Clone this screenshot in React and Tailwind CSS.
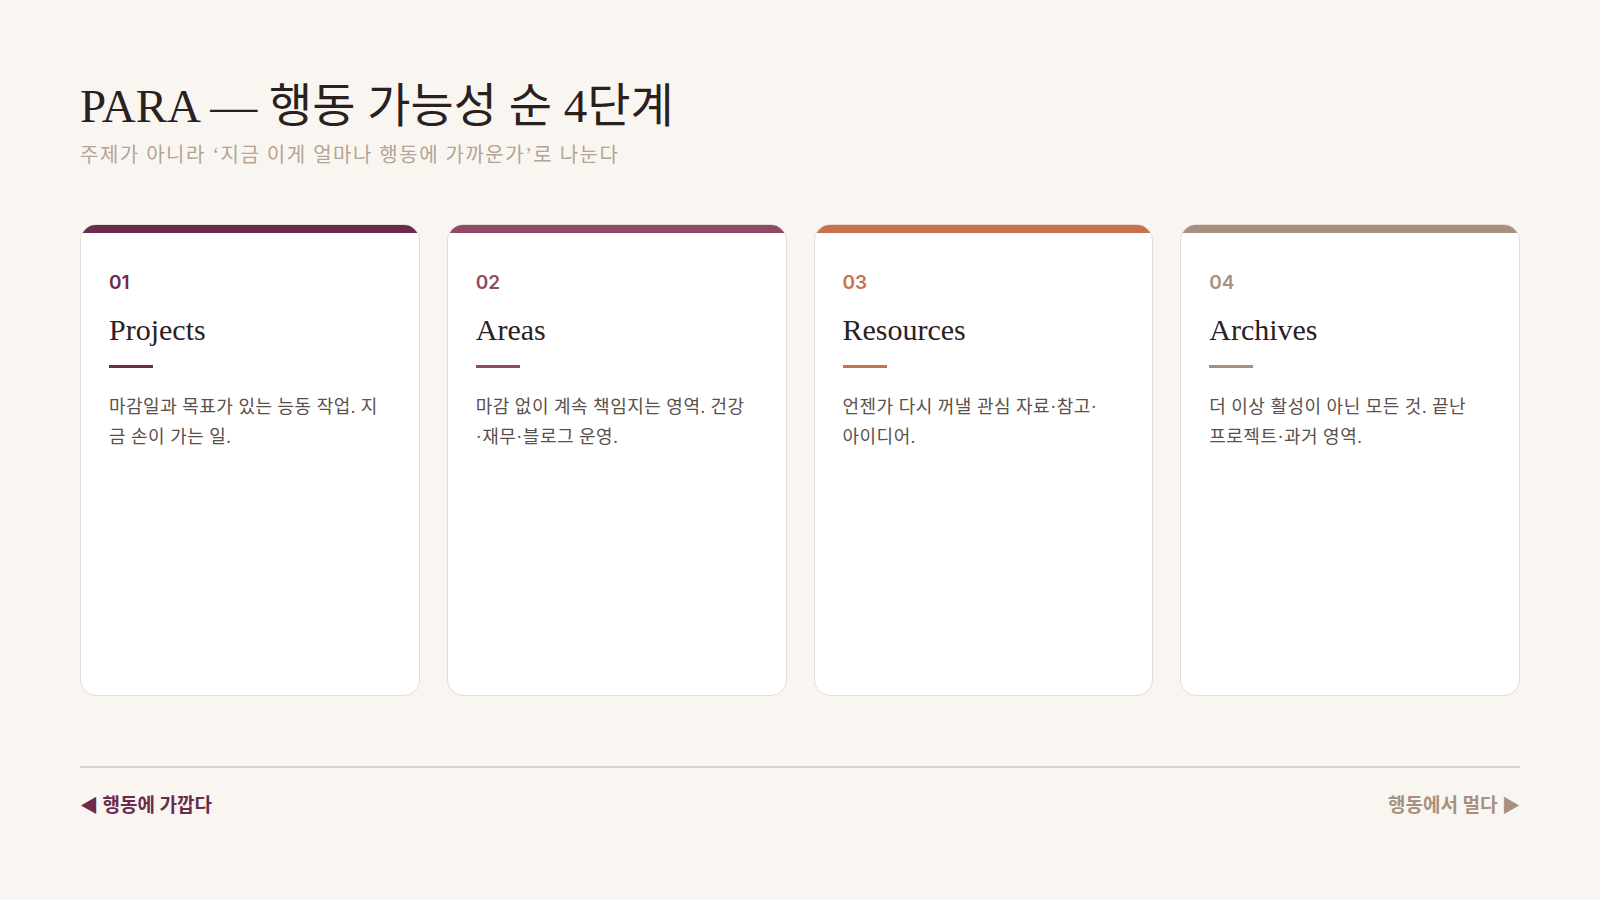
import React from 'react'

const serif = { fontFamily: '"Liberation Serif", "Noto Sans CJK KR", serif' }
const sans = { fontFamily: 'Inter, "Noto Sans CJK KR", sans-serif' }

const cards = [
  { n: '01', t: 'Projects', d: '마감일과 목표가 있는 능동 작업. 지금 손이 가는 일.', bar: 'bg-[#6b2b4d]', txt: 'text-[#6b2b4d]' },
  { n: '02', t: 'Areas', d: '마감 없이 계속 책임지는 영역. 건강·재무·블로그 운영.', bar: 'bg-[#8f4a68]', txt: 'text-[#8f4a68]' },
  { n: '03', t: 'Resources', d: '언젠가 다시 꺼낼 관심 자료·참고·아이디어.', bar: 'bg-[#c8714d]', txt: 'text-[#c8714d]' },
  { n: '04', t: 'Archives', d: '더 이상 활성이 아닌 모든 것. 끝난 프로젝트·과거 영역.', bar: 'bg-[#a89080]', txt: 'text-[#a89080]' },
]

export default function App() {
  return (
    <div className="min-h-[900px] w-full bg-[#f9f6f2] px-20 pt-[78px]">
      <h1 className="text-[47px] leading-[1.2] text-[#2a211f]" style={serif}>PARA — 행동 가능성 순 4단계</h1>
      <p className="mt-[6px] text-[20px] tracking-[1.5px] text-[#b5a394]" style={serif}>주제가 아니라 ‘지금 이게 얼마나 행동에 가까운가’로 나눈다</p>
      <div className="mt-[54px] grid grid-cols-4 gap-[27px]">
        {cards.map((c) => (
          <div key={c.n} className="flex h-[472px] flex-col overflow-hidden rounded-2xl border border-[#e6ddd4] bg-white">
            <div className={`h-2 ${c.bar}`} />
            <div className="px-7 pt-[36px]">
              <div className={`text-[19px] font-semibold ${c.txt}`} style={sans}>{c.n}</div>
              <div className="mt-[9px] text-[30px] text-[#2a211f]" style={serif}>{c.t}</div>
              <div className={`mt-[13px] h-[3px] w-11 ${c.bar}`} />
              <p className="mt-[24px] pr-3 text-[18px] leading-[30px] tracking-[0.5px] text-[#5a504b]" style={serif}>{c.d}</p>
            </div>
          </div>
        ))}
      </div>
      <div className="mt-[70px] border-t-2 border-[#dcd3cb]" />
      <div className="mt-[24px] flex items-center justify-between text-[19px] font-bold" style={sans}>
        <span className="text-[#6b2b4d]">◀ 행동에 가깝다</span>
        <span className="text-[#a89080]">행동에서 멀다 ▶</span>
      </div>
    </div>
  )
}
